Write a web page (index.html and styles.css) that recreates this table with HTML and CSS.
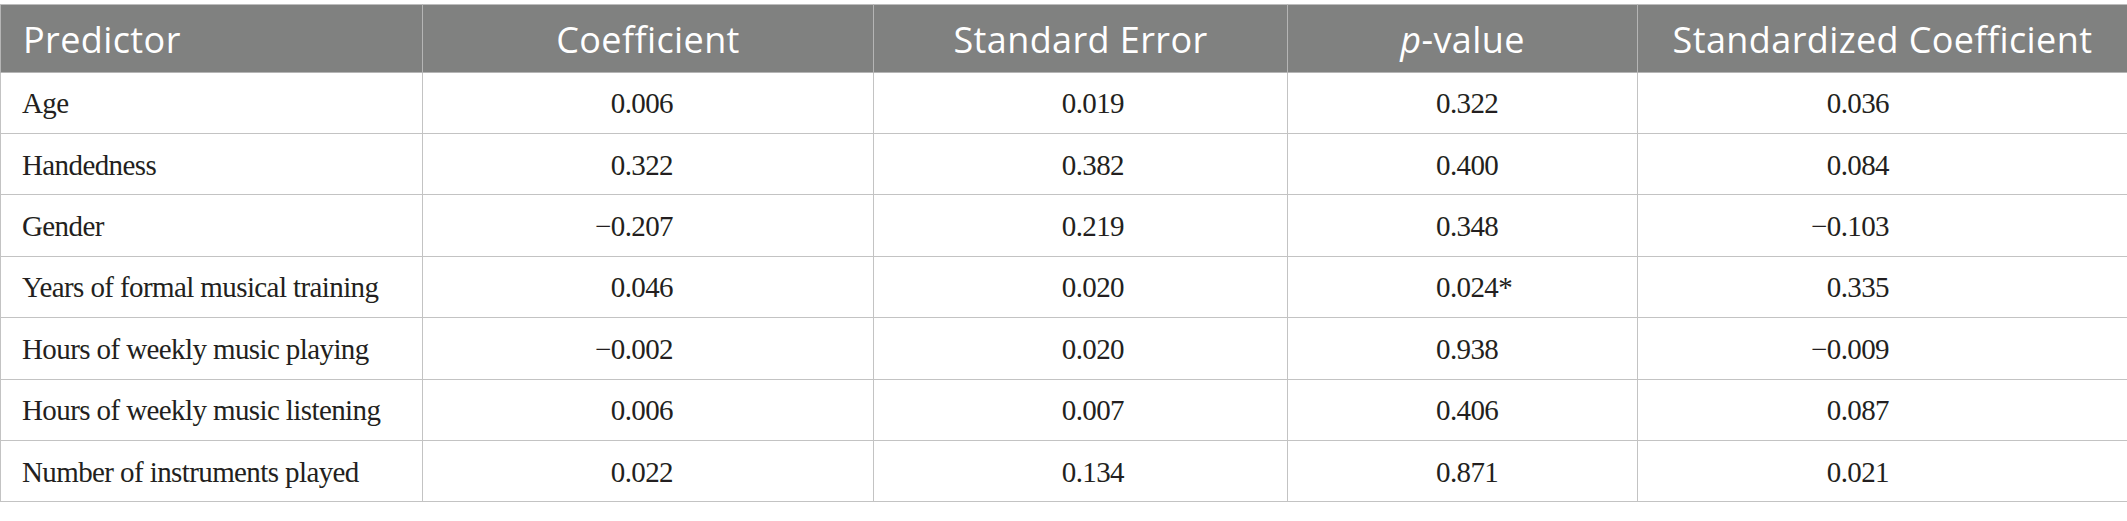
FILE: index.html
```html
<!DOCTYPE html>
<html>
<head>
<meta charset="utf-8">
<link rel="stylesheet" href="styles.css">
</head>
<body>
<table class="tbl">
  <colgroup>
    <col class="c1"><col class="c2"><col class="c3"><col class="c4"><col class="c5">
  </colgroup>
  <thead>
    <tr>
      <th class="left">Predictor</th>
      <th>Coefficient</th>
      <th>Standard Error</th>
      <th><i>p</i>-value</th>
      <th>Standardized Coefficient</th>
    </tr>
  </thead>
  <tbody>
    <tr><td class="name">Age</td><td class="n2">0.006</td><td class="n3">0.019</td><td class="n4">0.322</td><td class="n5">0.036</td></tr>
    <tr><td class="name">Handedness</td><td class="n2">0.322</td><td class="n3">0.382</td><td class="n4">0.400</td><td class="n5">0.084</td></tr>
    <tr><td class="name">Gender</td><td class="n2">−0.207</td><td class="n3">0.219</td><td class="n4">0.348</td><td class="n5">−0.103</td></tr>
    <tr><td class="name">Years of formal musical training</td><td class="n2">0.046</td><td class="n3">0.020</td><td class="n4">0.024*</td><td class="n5">0.335</td></tr>
    <tr><td class="name">Hours of weekly music playing</td><td class="n2">−0.002</td><td class="n3">0.020</td><td class="n4">0.938</td><td class="n5">−0.009</td></tr>
    <tr><td class="name">Hours of weekly music listening</td><td class="n2">0.006</td><td class="n3">0.007</td><td class="n4">0.406</td><td class="n5">0.087</td></tr>
    <tr><td class="name">Number of instruments played</td><td class="n2">0.022</td><td class="n3">0.134</td><td class="n4">0.871</td><td class="n5">0.021</td></tr>
  </tbody>
</table>
</body>
</html>
```

FILE: styles.css
```css
html, body {
  margin: 0;
  padding: 0;
  background: #ffffff;
}
body {
  padding-top: 4px;
}
.tbl {
  width: 2127px;
  border-collapse: collapse;
  table-layout: fixed;
}
.c1 { width: 422px; }
.c2 { width: 451px; }
.c3 { width: 414px; }
.c4 { width: 350px; }
.c5 { width: 490px; }

.tbl th {
  background: #808180;
  color: #ffffff;
  font-family: "Open Sans", "Noto Sans", sans-serif;
  font-weight: 400;
  font-size: 36px;
  letter-spacing: 0.4px;
  text-align: center;
  height: 67.5px;
  padding: 4px 10px 0 10px;
  border: 1px solid #b5b5b5;
  border-top-color: #bdbdbd;
  vertical-align: middle;
  line-height: 1;
  box-sizing: border-box;
}
.tbl th.left {
  text-align: left;
  padding-left: 22px;
}
.tbl td {
  font-family: "Liberation Serif", "Times New Roman", serif;
  font-size: 29px;
  letter-spacing: -0.6px;
  color: #231f20;
  height: 61.43px;
  border: 1px solid #c3c3c3;
  vertical-align: middle;
  line-height: 1;
  padding: 0;
  padding-top: 2px;
  box-sizing: border-box;
  white-space: nowrap;
}
.tbl td.name {
  text-align: left;
  padding-left: 21px;
}
.tbl td.n2 {
  text-align: right;
  padding-right: 200px;
}
.tbl td.n3 {
  text-align: right;
  padding-right: 163px;
}
.tbl td.n4 {
  text-align: left;
  padding-left: 148px;
}
.tbl td.n5 {
  text-align: right;
  padding-right: 238px;
}
```
